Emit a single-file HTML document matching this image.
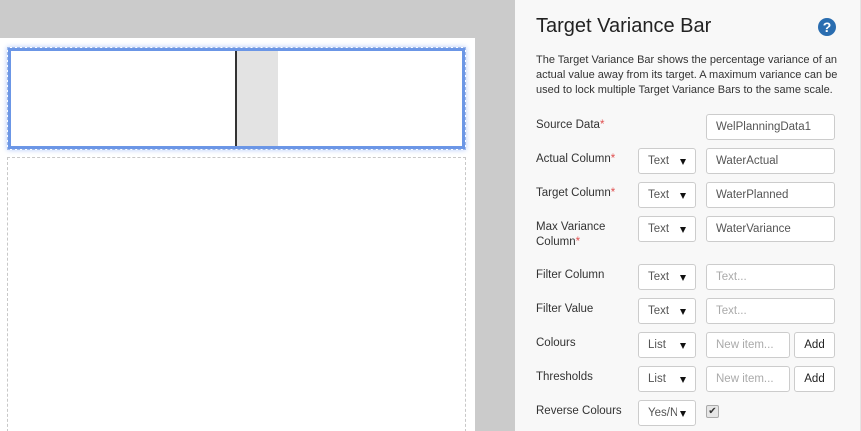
<!DOCTYPE html>
<html><head><style>
*{box-sizing:border-box;margin:0;padding:0}
html,body{width:861px;height:431px;overflow:hidden}
body{background:#cbcbcb;font-family:"Segoe UI","Liberation Sans",sans-serif;position:relative}
.abs{position:absolute}
.canvas{left:0;top:38px;width:475px;height:393px;background:#fff}
.panel{left:515px;top:0;width:345px;height:431px;background:#f8f8f8}
.edge{left:860px;top:0;width:1px;height:431px;background:#e4e4e4}
.lbl{position:absolute;left:536px;font-size:11.5px;color:#333}
.req{color:#e05050}
.sel,.inp,.btn{position:absolute;height:26px;border:1px solid #ccc;border-radius:3px;background:#fff;font-size:11.5px;line-height:24px}
.sel{left:638px;width:58px;padding-left:9px;color:#555;overflow:hidden;white-space:nowrap}
.sel::after{content:"";position:absolute;right:9px;top:10px;border-left:3.5px solid transparent;border-right:3.5px solid transparent;border-top:6px solid #111}
.inp{left:706px;width:129px;padding-left:9px;color:#555}
.ph{color:#aaa}
.btn{left:794px;width:41px;text-align:center;color:#222}
</style></head><body>
<div class="abs canvas"></div>
<div class="abs" style="left:7px;top:47px;width:459px;height:103px;border:1px dashed #9fb8e8;box-shadow:0 0 5px #b8cdfa"></div>
<div class="abs" style="left:8px;top:48px;width:457px;height:101px;border:3px solid #6b96e6;background:#fff"></div>
<div class="abs" style="left:235px;top:51px;width:2px;height:95px;background:#333"></div>
<div class="abs" style="left:237px;top:51px;width:41px;height:95px;background:#e3e3e3"></div>
<div class="abs" style="left:7px;top:157px;width:459px;height:280px;border:1px dashed #c8c8c8"></div>
<div class="abs panel"></div>
<div class="abs edge"></div>
<div class="abs" style="left:536px;top:15px;font-size:20px;color:#222">Target Variance Bar</div>
<div class="abs" style="left:818px;top:18px;width:18px;height:18px;border-radius:50%;background:#2a6db0;color:#fff;font-weight:bold;font-size:14px;text-align:center;line-height:18px">?</div>
<div class="abs" style="left:536px;top:53px;width:310px;font-size:11px;line-height:15px;color:#333">The Target Variance Bar shows the percentage variance of an actual value away from its target. A maximum variance can be used to lock multiple Target Variance Bars to the same scale.</div>

<div class="lbl" style="top:119px">Source Data<span class="req">*</span></div>
<div class="inp" style="top:114px">WelPlanningData1</div>

<div class="lbl" style="top:153px">Actual Column<span class="req">*</span></div>
<div class="sel" style="top:148px">Text</div><div class="inp" style="top:148px">WaterActual</div>

<div class="lbl" style="top:187px">Target Column<span class="req">*</span></div>
<div class="sel" style="top:182px">Text</div><div class="inp" style="top:182px">WaterPlanned</div>

<div class="lbl" style="top:220px;line-height:15px">Max Variance<br>Column<span class="req">*</span></div>
<div class="sel" style="top:216px">Text</div><div class="inp" style="top:216px">WaterVariance</div>

<div class="lbl" style="top:269px">Filter Column</div>
<div class="sel" style="top:264px">Text</div><div class="inp ph" style="top:264px">Text...</div>

<div class="lbl" style="top:303px">Filter Value</div>
<div class="sel" style="top:298px">Text</div><div class="inp ph" style="top:298px">Text...</div>

<div class="lbl" style="top:337px">Colours</div>
<div class="sel" style="top:332px">List</div><div class="inp ph" style="top:332px;width:84px">New item...</div><div class="btn" style="top:332px">Add</div>

<div class="lbl" style="top:371px">Thresholds</div>
<div class="sel" style="top:366px">List</div><div class="inp ph" style="top:366px;width:84px">New item...</div><div class="btn" style="top:366px">Add</div>

<div class="lbl" style="top:405px">Reverse Colours</div>
<div class="sel" style="top:400px"><span style="display:inline-block;width:29px;overflow:hidden">Yes/No</span></div>
<div class="abs" style="left:706px;top:405px;width:13px;height:13px;border:1px solid #aaa;border-radius:2px;background:#e6e6e6;font-size:10px;line-height:11px;text-align:center;color:#333">✔</div>
</body></html>
